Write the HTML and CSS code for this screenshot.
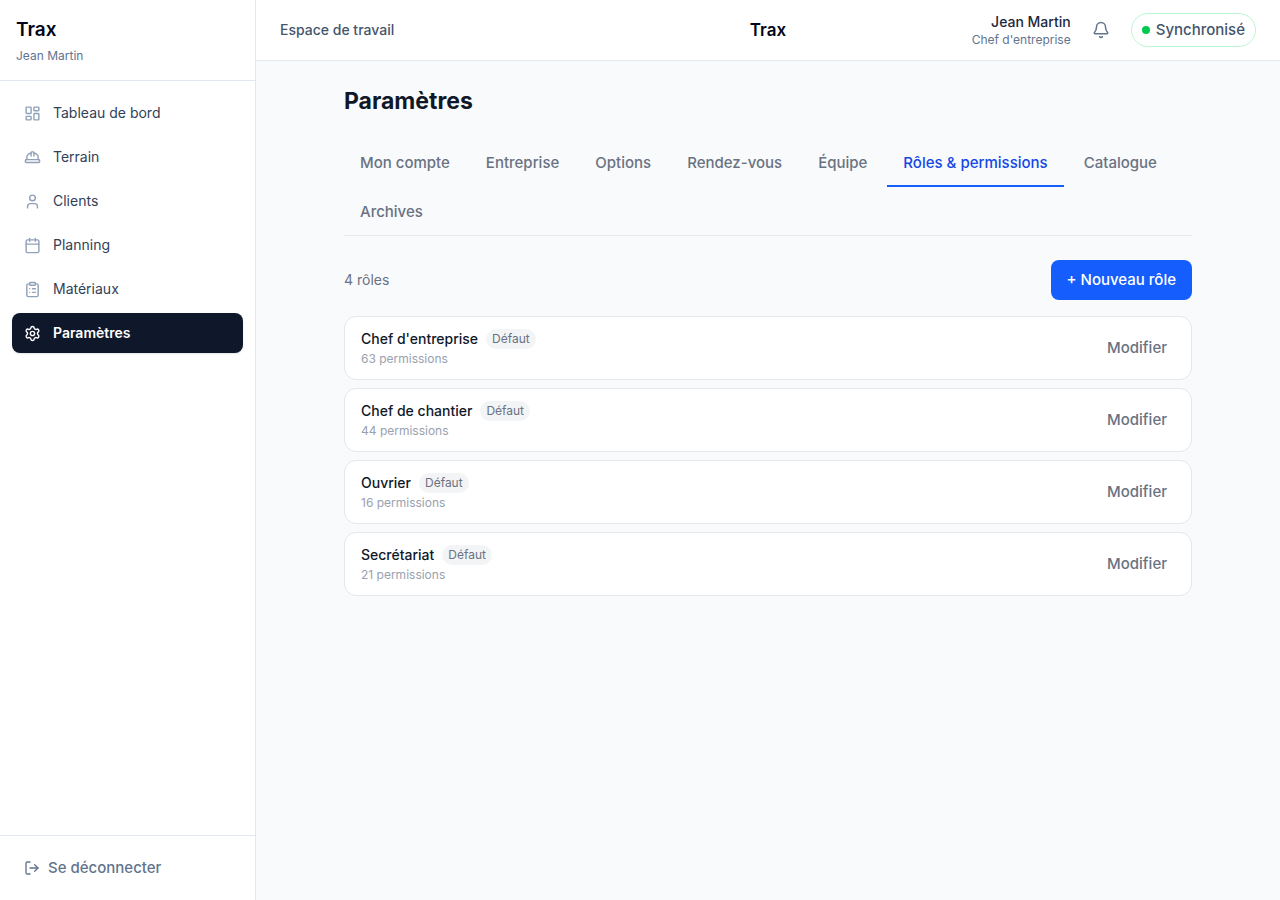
FILE: index.html
```html
<!DOCTYPE html>
<html lang="fr">
<head>
<meta charset="utf-8">
<meta name="viewport" content="width=device-width, initial-scale=1">
<title>Trax – Paramètres</title>
<link rel="stylesheet" href="styles.css">
</head>
<body>
<div class="app">
  <aside class="sidebar">
    <div class="brand">
      <p class="brand-name">Trax</p>
      <p class="brand-user">Jean Martin</p>
    </div>
    <nav class="nav" aria-label="Navigation principale">
      <a class="nav-link" href="#">
        <svg class="icon" viewBox="0 0 24 24" aria-hidden="true"><rect x="3" y="3" width="7" height="9" rx="1"/><rect x="14" y="3" width="7" height="5" rx="1"/><rect x="14" y="12" width="7" height="9" rx="1"/><rect x="3" y="16" width="7" height="5" rx="1"/></svg>
        Tableau de bord
      </a>
      <a class="nav-link" href="#">
        <svg class="icon" viewBox="0 0 24 24" aria-hidden="true"><path d="M10 10V5a1 1 0 0 1 1-1h2a1 1 0 0 1 1 1v5"/><path d="M14 6a6 6 0 0 1 6 6v3"/><path d="M4 15v-3a6 6 0 0 1 6-6"/><rect x="2" y="15" width="20" height="4" rx="1"/></svg>
        Terrain
      </a>
      <a class="nav-link" href="#">
        <svg class="icon" viewBox="0 0 24 24" aria-hidden="true"><path d="M19 21v-2a4 4 0 0 0-4-4H9a4 4 0 0 0-4 4v2"/><circle cx="12" cy="7" r="4"/></svg>
        Clients
      </a>
      <a class="nav-link" href="#">
        <svg class="icon" viewBox="0 0 24 24" aria-hidden="true"><path d="M8 2v4"/><path d="M16 2v4"/><rect x="3" y="4" width="18" height="18" rx="2"/><path d="M3 10h18"/></svg>
        Planning
      </a>
      <a class="nav-link" href="#">
        <svg class="icon" viewBox="0 0 24 24" aria-hidden="true"><rect x="8" y="2" width="8" height="4" rx="1"/><path d="M16 4h2a2 2 0 0 1 2 2v14a2 2 0 0 1-2 2H6a2 2 0 0 1-2-2V6a2 2 0 0 1 2-2h2"/><path d="M12 11h4"/><path d="M12 16h4"/><path d="M8 11h.01"/><path d="M8 16h.01"/></svg>
        Matériaux
      </a>
      <a class="nav-link nav-link-active" href="#" aria-current="page">
        <svg class="icon" viewBox="0 0 24 24" aria-hidden="true"><path d="M9.671 4.136a2.34 2.34 0 0 1 4.659 0 2.34 2.34 0 0 0 3.319 1.915 2.34 2.34 0 0 1 2.33 4.033 2.34 2.34 0 0 0 0 3.831 2.34 2.34 0 0 1-2.33 4.033 2.34 2.34 0 0 0-3.319 1.915 2.34 2.34 0 0 1-4.659 0 2.34 2.34 0 0 0-3.32-1.915 2.34 2.34 0 0 1-2.33-4.033 2.34 2.34 0 0 0 0-3.831A2.34 2.34 0 0 1 6.35 6.051a2.34 2.34 0 0 0 3.319-1.915"/><circle cx="12" cy="12" r="3"/></svg>
        Paramètres
      </a>
    </nav>
    <div class="sidebar-footer">
      <button class="logout" type="button">
        <svg class="icon icon-small" viewBox="0 0 24 24" aria-hidden="true"><path d="m16 17 5-5-5-5"/><path d="M21 12H9"/><path d="M9 21H5a2 2 0 0 1-2-2V5a2 2 0 0 1 2-2h4"/></svg>
        Se déconnecter
      </button>
    </div>
  </aside>

  <div class="workspace">
    <header class="topbar">
      <p class="topbar-space">Espace de travail</p>
      <p class="topbar-title">Trax</p>
      <div class="topbar-actions">
        <div class="identity">
          <p class="identity-name">Jean Martin</p>
          <p class="identity-role">Chef d'entreprise</p>
        </div>
        <button class="bell" type="button" aria-label="Notifications">
          <svg class="icon icon-bell" viewBox="0 0 24 24" aria-hidden="true"><path d="M10.268 21a2 2 0 0 0 3.464 0"/><path d="M3.262 15.326A1 1 0 0 0 4 17h16a1 1 0 0 0 .74-1.673C19.41 13.956 18 12.499 18 8A6 6 0 0 0 6 8c0 4.499-1.411 5.956-2.738 7.326"/></svg>
        </button>
        <button class="sync" type="button"><span class="sync-dot"></span>Synchronisé</button>
      </div>
    </header>

    <main class="content">
      <h1 class="page-title">Paramètres</h1>
      <div class="tabs" role="tablist">
        <button class="tab" type="button" role="tab">Mon compte</button>
        <button class="tab" type="button" role="tab">Entreprise</button>
        <button class="tab" type="button" role="tab">Options</button>
        <button class="tab" type="button" role="tab">Rendez-vous</button>
        <button class="tab" type="button" role="tab">Équipe</button>
        <button class="tab tab-active" type="button" role="tab" aria-selected="true">Rôles &amp; permissions</button>
        <button class="tab" type="button" role="tab">Catalogue</button>
        <button class="tab" type="button" role="tab">Archives</button>
      </div>
      <div class="toolbar">
        <p class="count">4 rôles</p>
        <button class="primary" type="button">+ Nouveau rôle</button>
      </div>
      <ul class="roles">
        <li class="role">
          <div class="role-info">
            <div class="role-head"><span class="role-name">Chef d'entreprise</span><span class="badge">Défaut</span></div>
            <p class="role-detail">63 permissions</p>
          </div>
          <button class="edit" type="button">Modifier</button>
        </li>
        <li class="role">
          <div class="role-info">
            <div class="role-head"><span class="role-name">Chef de chantier</span><span class="badge">Défaut</span></div>
            <p class="role-detail">44 permissions</p>
          </div>
          <button class="edit" type="button">Modifier</button>
        </li>
        <li class="role">
          <div class="role-info">
            <div class="role-head"><span class="role-name">Ouvrier</span><span class="badge">Défaut</span></div>
            <p class="role-detail">16 permissions</p>
          </div>
          <button class="edit" type="button">Modifier</button>
        </li>
        <li class="role">
          <div class="role-info">
            <div class="role-head"><span class="role-name">Secrétariat</span><span class="badge">Défaut</span></div>
            <p class="role-detail">21 permissions</p>
          </div>
          <button class="edit" type="button">Modifier</button>
        </li>
      </ul>
    </main>
  </div>
</div>
</body>
</html>
```

FILE: styles.css
```css
*,
*::before,
*::after {
  box-sizing: border-box;
}

body {
  margin: 0;
  background: #f8fafc;
  color: #0f172b;
  font-family: Inter, "Liberation Sans", sans-serif;
  font-size: 15px;
  line-height: 24px;
}

p,
h1,
ul {
  margin: 0;
  padding: 0;
}

button {
  margin: 0;
  padding: 0;
  border: 0;
  background: transparent;
  color: inherit;
  font: inherit;
  font-weight: 500;
  cursor: pointer;
}

.icon {
  flex: none;
  width: 17px;
  height: 17px;
  fill: none;
  stroke: currentColor;
  stroke-width: 2;
  stroke-linecap: round;
  stroke-linejoin: round;
}

.icon-small {
  width: 16px;
  height: 16px;
}

.icon-bell {
  width: 18px;
  height: 18px;
}

.app {
  display: flex;
  min-height: 100vh;
}

/* Sidebar */

.sidebar {
  display: flex;
  flex: none;
  flex-direction: column;
  width: 256px;
  border-right: 1px solid #e2e8f0;
  background: #fff;
}

.brand {
  display: grid;
  gap: 4px;
  padding: 16px;
  border-bottom: 1px solid #e2e8f0;
}

.brand-name {
  color: #020618;
  font-size: 19px;
  font-weight: 600;
  line-height: 28px;
}

.brand-user {
  color: #62748e;
  font-size: 12px;
  line-height: 16px;
}

.nav {
  display: flex;
  flex: 1;
  flex-direction: column;
  gap: 4px;
  padding: 12px;
}

.nav-link {
  display: flex;
  align-items: center;
  gap: 12px;
  padding: 10px 12px;
  border-radius: 8px;
  color: #314158;
  font-size: 14px;
  line-height: 20px;
  text-decoration: none;
}

.nav-link .icon {
  color: #90a1b9;
}

.nav-link-active {
  background: #0f172b;
  box-shadow: 0 1px 2px rgb(0 0 0 / 10%);
  color: #fff;
  font-weight: 600;
}

.nav-link-active .icon {
  color: #fff;
}

.sidebar-footer {
  padding: 12px;
  border-top: 1px solid #e2e8f0;
}

.logout {
  display: flex;
  align-items: center;
  gap: 8px;
  width: 100%;
  padding: 8px 12px;
  color: #62748e;
}

/* Top bar */

.workspace {
  flex: 1;
  min-width: 0;
}

.topbar {
  display: grid;
  grid-template-columns: 1fr auto 1fr;
  align-items: center;
  padding: 12px 24px;
  border-bottom: 1px solid #e2e8f0;
  background: #fff;
}

.topbar-space {
  color: #45556c;
  font-size: 14px;
  font-weight: 500;
  line-height: 20px;
}

.topbar-title {
  color: #020618;
  font-size: 17px;
  font-weight: 600;
  line-height: 28px;
}

.topbar-actions {
  display: flex;
  align-items: center;
  justify-content: flex-end;
  gap: 12px;
}

.identity {
  text-align: right;
}

.identity-name {
  color: #1d293d;
  font-size: 14px;
  font-weight: 500;
  line-height: 20px;
}

.identity-role {
  color: #62748e;
  font-size: 12px;
  line-height: 16px;
}

.bell {
  display: grid;
  place-items: center;
  width: 36px;
  height: 36px;
  color: #62748e;
}

.sync {
  display: flex;
  align-items: center;
  gap: 6px;
  padding: 4px 10px;
  border: 1px solid #b9f8cf;
  border-radius: 17px;
  color: #45556c;
}

.sync-dot {
  width: 8px;
  height: 8px;
  border-radius: 50%;
  background: #00c950;
}

/* Settings page */

.content {
  max-width: 896px;
  margin: 0 auto;
  padding: 24px;
}

.page-title {
  color: #101828;
  font-size: 23px;
  font-weight: 700;
  line-height: 32px;
}

.tabs {
  display: flex;
  flex-wrap: wrap;
  gap: 4px;
  margin: 24px 0;
  border-bottom: 1px solid #e5e7eb;
}

.tab {
  margin-bottom: -1px;
  padding: 10px 16px;
  border-bottom: 2px solid transparent;
  color: #6a7282;
}

.tab-active {
  border-bottom-color: #155dfc;
  color: #1447e6;
}

.toolbar {
  display: flex;
  align-items: center;
  justify-content: space-between;
  margin-bottom: 16px;
}

.count {
  color: #6a7282;
  font-size: 14px;
  line-height: 20px;
}

.primary {
  padding: 8px 16px;
  border-radius: 8px;
  background: #155dfc;
  color: #fff;
}

.roles {
  display: grid;
  gap: 8px;
  list-style: none;
}

.role {
  display: flex;
  align-items: center;
  justify-content: space-between;
  padding: 12px;
  padding-left: 16px;
  border: 1px solid #e5e7eb;
  border-radius: 12px;
  background: #fff;
}

.role-head {
  display: flex;
  align-items: center;
  gap: 8px;
  margin-bottom: 2px;
}

.role-name {
  color: #101828;
  font-size: 14px;
  font-weight: 500;
  line-height: 20px;
}

.badge {
  padding: 2px 6px;
  border-radius: 10px;
  background: #f3f4f6;
  color: #6a7282;
  font-size: 12px;
  line-height: 16px;
}

.role-detail {
  color: #99a1af;
  font-size: 12px;
  line-height: 16px;
}

.edit {
  padding: 6px 12px;
  color: #6a7282;
}
```
